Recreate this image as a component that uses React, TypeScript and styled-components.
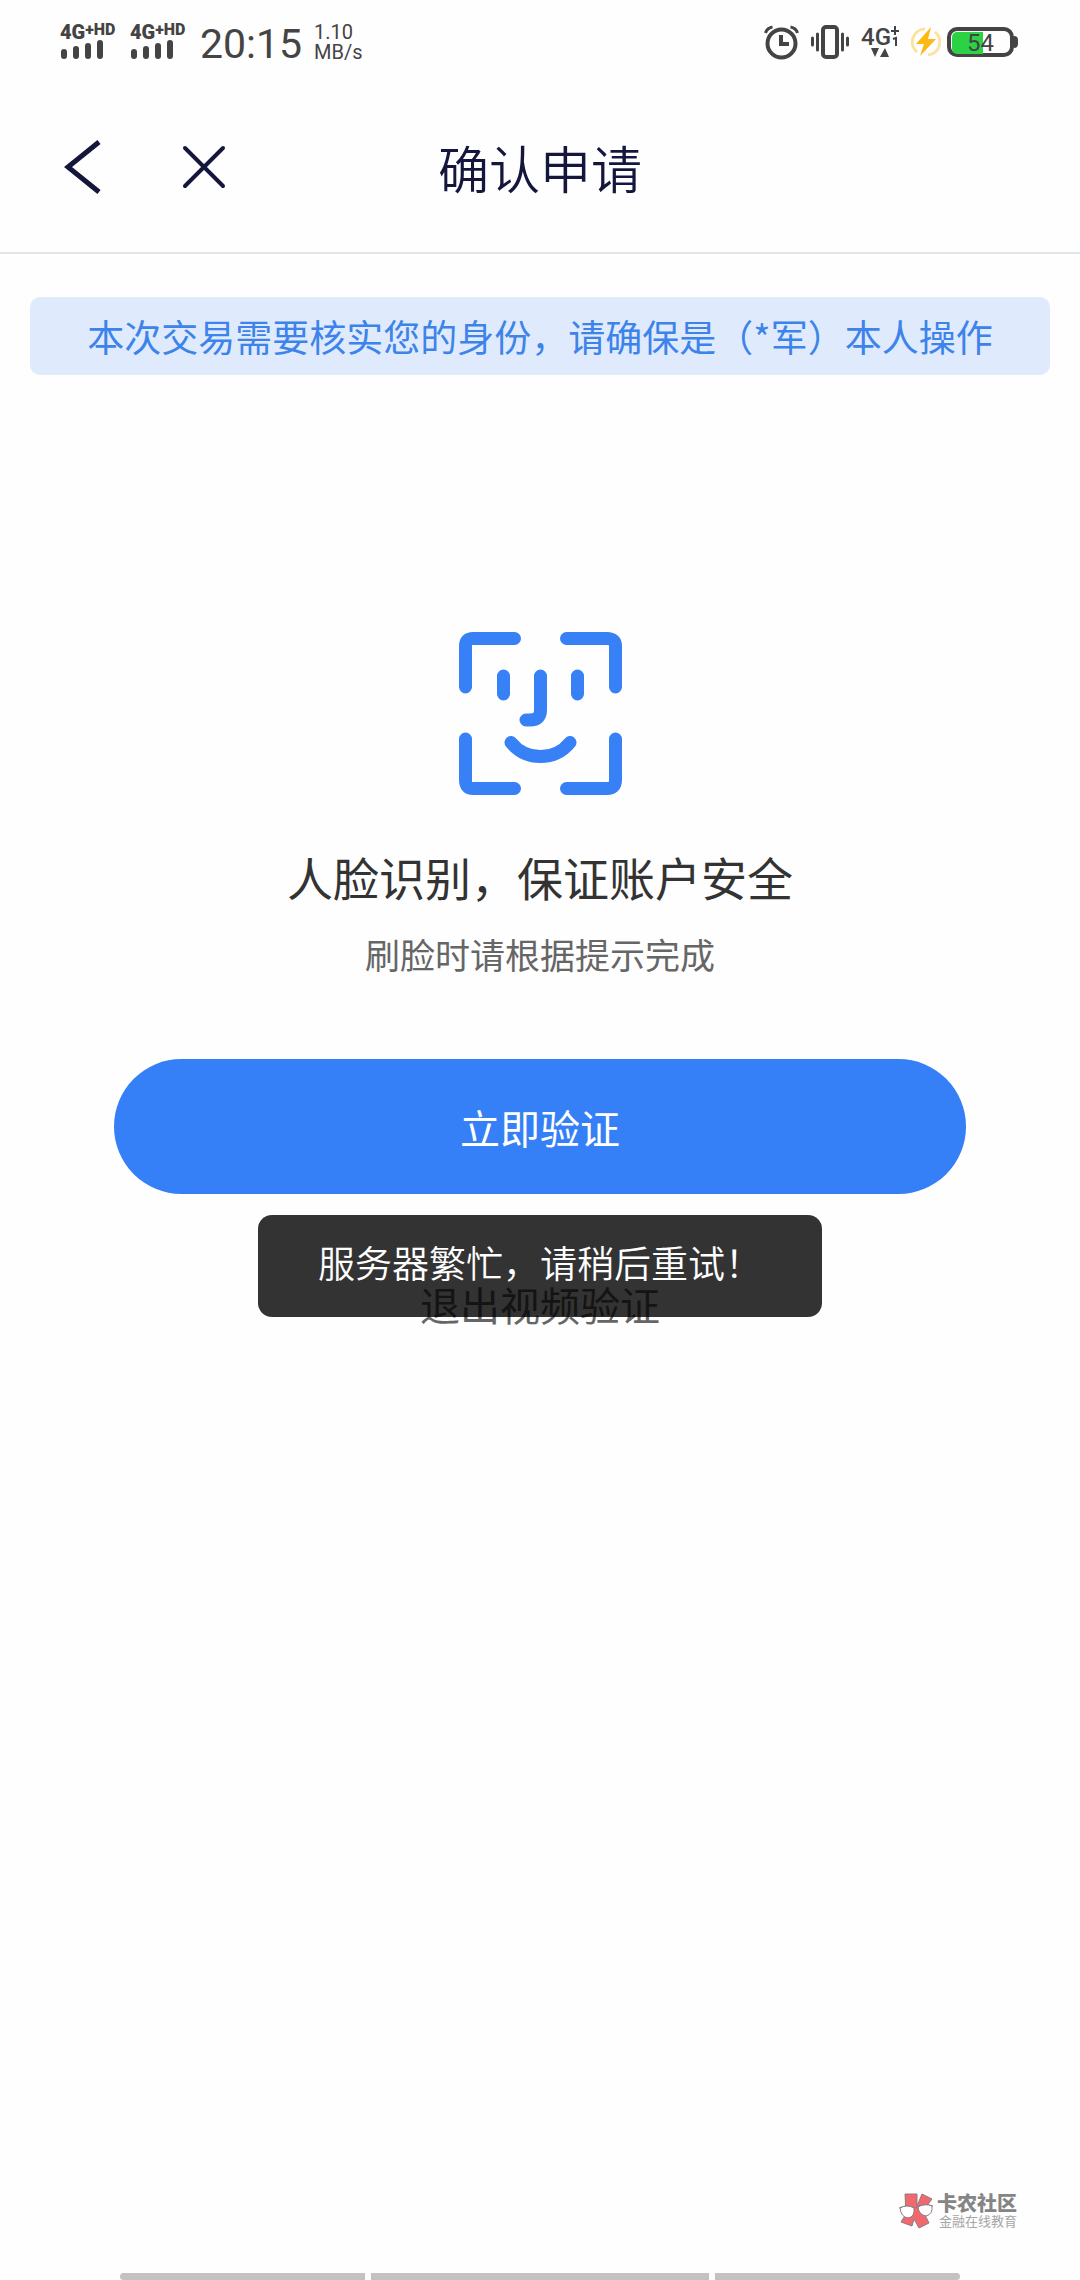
import React from 'react';
import styled, { createGlobalStyle } from 'styled-components';

const GlobalStyle = createGlobalStyle`
  * { box-sizing: border-box; }
  body {
    margin: 0;
    background: #fefefe;
    font-family: "Noto Sans CJK SC", sans-serif;
  }
  button { font-family: inherit; border: 0; background: none; padding: 0; cursor: pointer; }
  svg { display: block; }
`;

const Page = styled.div`
  min-height: 100vh;
  display: flex;
  flex-direction: column;
`;

const StatusBar = styled.div`
  height: 84px;
  padding: 0 66px 0 60px;
  display: flex;
  align-items: center;
  justify-content: space-between;
  color: #444;
  font-family: Roboto, "Noto Sans CJK SC", sans-serif;
`;

const StatusGroup = styled.div<{ $gap: number }>`
  display: flex;
  align-items: center;
  gap: ${(p) => p.$gap}px;
`;

const Signal = styled.div`
  width: 58px;
`;

const SignalLabel = styled.div`
  display: flex;
  align-items: flex-start;
  font-size: 20px;
  line-height: 16px;
  font-weight: 900;
  small { font-size: 16px; line-height: 12px; }
`;

const Clock = styled.div`
  font-size: 41px;
  line-height: 48px;
  padding-top: 4px;
`;

const Speed = styled.div`
  font-size: 20px;
  line-height: 20px;
`;

const Network = styled.div`
  width: 38px;
  display: flex;
  flex-direction: column;
  align-items: center;
`;

const NetworkLabel = styled.div`
  display: flex;
  font-size: 24px;
  line-height: 22px;
  font-weight: 500;
`;

const Battery = styled.div`
  width: 67px;
  height: 30px;
  border: 4px solid #444;
  border-radius: 10px;
  padding: 1px;
  position: relative;
  display: grid;
  &::after {
    content: "";
    position: absolute;
    right: -8px;
    top: 5px;
    width: 4px;
    height: 12px;
    border-radius: 0 4px 4px 0;
    background: #444;
  }
`;

const BatteryFill = styled.div`
  grid-area: 1 / 1;
  border-radius: 5px 0 0 5px;
  background: #2bd344;
`;

const BatteryText = styled.div`
  grid-area: 1 / 1;
  text-align: center;
  font-size: 24px;
  line-height: 22px;
`;

const Header = styled.header`
  height: 170px;
  padding: 0 60px 2px;
  display: grid;
  grid-template-columns: 1fr auto 1fr;
  align-items: center;
  border-bottom: 2px solid #e3e5e7;
`;

const NavButtons = styled.div`
  display: flex;
  align-items: center;
  gap: 78px;
`;

const Title = styled.h1`
  margin: 0;
  font-size: 51px;
  line-height: 72px;
  font-weight: 350;
  color: #14163c;
`;

const Main = styled.main`
  flex: 1;
  display: flex;
  flex-direction: column;
  padding: 43px 30px 0;
`;

const Notice = styled.p`
  margin: 0;
  min-height: 78px;
  border-radius: 10px;
  background: #dfebfd;
  color: #3d83ea;
  display: flex;
  align-items: center;
  justify-content: center;
  font-size: 37px;
  line-height: 54px;
`;

const Verify = styled.section`
  display: flex;
  flex-direction: column;
  align-items: center;
  padding: 257px 84px 0;
`;

const Heading = styled.h2`
  margin: 45px 0 0;
  font-size: 46px;
  line-height: 72px;
  font-weight: 400;
  color: #333;
`;

const Hint = styled.p`
  margin: 18px 0 0;
  font-size: 35px;
  line-height: 48px;
  color: #666;
`;

const PrimaryButton = styled.button`
  align-self: stretch;
  height: 135px;
  margin-top: 81px;
  border-radius: 68px;
  background: #357ff7;
  color: #fff;
  font-size: 40px;
`;

const ExitArea = styled.div`
  position: relative;
  align-self: stretch;
  display: flex;
  justify-content: center;
  padding-top: 80px;
`;

const ExitButton = styled.button`
  font-size: 40px;
  line-height: 60px;
  color: #666;
`;

const Toast = styled.div`
  position: absolute;
  top: 21px;
  left: 50%;
  transform: translateX(-50%);
  padding: 20px 60px 28px;
  border-radius: 14px;
  background: rgba(0, 0, 0, 0.8);
  color: #fff;
  font-size: 37px;
  line-height: 54px;
  font-weight: 350;
  white-space: nowrap;
`;

const Footer = styled.footer`
  display: flex;
  flex-direction: column;
  gap: 44px;
`;

const Brand = styled.div`
  align-self: flex-end;
  display: flex;
  align-items: center;
  gap: 3px;
  margin-right: 63px;
`;

const BrandName = styled.div`
  font-size: 20px;
  line-height: 21px;
  font-weight: 900;
  color: #858585;
`;

const BrandTag = styled.div`
  padding-left: 2px;
  font-size: 13px;
  line-height: 16px;
  color: #a6a6a6;
`;

const GestureBar = styled.div`
  display: grid;
  grid-template-columns: 245fr 339fr 245fr;
  gap: 6px;
  padding: 0 120px;
`;

const GestureSegment = styled.div`
  height: 7px;
  background: #c2c2c2;
  &:first-child { border-radius: 4px 0 0 4px; }
  &:last-child { border-radius: 0 4px 4px 0; }
`;

const SignalStrength = () => (
  <Signal>
    <SignalLabel>4G<small>+HD</small></SignalLabel>
    <svg width="44" height="20" viewBox="0 0 44 20" stroke="#444" strokeWidth="6" strokeLinecap="round">
      <path d="M4 12v4M16 9v7M28 6v10M40 3v13" />
    </svg>
  </Signal>
);

const AlarmIcon = () => (
  <svg width="35" height="35" viewBox="0 0 35 35" fill="none" stroke="#444">
    <circle cx="17.500" cy="18.500" r="14" strokeWidth="4" />
    <path d="M17 10v9h8" strokeWidth="4" />
    <path d="M1.500 8Q3 3 8.500 2M33.500 8Q32 3 26.500 2" strokeWidth="3" />
  </svg>
);

const VibrateIcon = () => (
  <svg width="38" height="34" viewBox="0 0 38 34" fill="none" stroke="#444" strokeLinecap="round">
    <rect x="12" y="2" width="14" height="30" rx="3" strokeWidth="4" />
    <path d="M1.500 13v7M36.500 13v7M6.500 9v16M31.500 9v16" strokeWidth="3" />
  </svg>
);

const ChargeIcon = () => (
  <svg width="30" height="30" viewBox="0 0 30 30" fill="none">
    <path d="M14 2A13 13 0 0 0 6 25M17 28A13 13 0 0 0 24 5" stroke="#fde3a0" strokeWidth="3" />
    <path d="M20 0 5 17h8l-4 12L25 12h-8z" fill="#fdb813" />
  </svg>
);

const FaceIcon = () => (
  <svg width="163" height="163" viewBox="0 0 163 163" fill="none" stroke="#3880f5" strokeWidth="13" strokeLinecap="round">
    <path d="M6.500 55V14Q6.500 6.500 14 6.500H55.500M107.500 6.500H148Q156.500 6.500 156.500 14V55M156.500 107V148Q156.500 156.500 148 156.500H107.500M55.500 156.500H14Q6.500 156.500 6.500 148V107" />
    <path d="M44.500 44V62M118.500 44V62M81.500 44V78Q81.500 88 71 88H67M52 110.500A38 38 0 0 0 111 110.500" />
  </svg>
);

const BrandLogo = () => (
  <svg width="35" height="36" viewBox="0 0 35 36" stroke="#8d7c80" strokeWidth="1">
    <path d="M6 1h12v12l5-12 10 5-9 12 6 12-10 5-5-9-2 7-11-4 5-8z" fill="#f2686f" />
    <path d="M0 15Q8 11 16 15L18 14Q26 10 34 13" fill="none" />
    <path d="M1 15Q8 11 15 15Q16 24 9 25Q2 24 1 15zM19 14Q26 10 33 13Q34 21 27 23Q20 22 19 14z" fill="#fff" />
  </svg>
);

export default function App() {
  return (
    <Page>
      <GlobalStyle />
      <StatusBar>
        <StatusGroup $gap={12}>
          <SignalStrength />
          <SignalStrength />
          <Clock>20:15</Clock>
          <Speed>1.10<br />MB/s</Speed>
        </StatusGroup>
        <StatusGroup $gap={12}>
          <AlarmIcon />
          <VibrateIcon />
          <Network>
            <NetworkLabel>
              4G
              <svg width="8" height="20" viewBox="0 0 8 20" stroke="#444" strokeWidth="2" fill="none">
                <path d="M4 0v9M0 5h8M2 13l3-1v8" />
              </svg>
            </NetworkLabel>
            <svg width="18" height="10" viewBox="0 0 18 10" fill="#444">
              <path d="M0 0h8L4 9zM9 9h9l-4-9z" />
            </svg>
          </Network>
          <StatusGroup $gap={6}>
            <ChargeIcon />
            <Battery>
              <BatteryFill style={{ width: '54%' }} />
              <BatteryText>54</BatteryText>
            </Battery>
          </StatusGroup>
        </StatusGroup>
      </StatusBar>
      <Header>
        <NavButtons>
          <button type="button" aria-label="返回">
            <svg width="44" height="54" viewBox="0 0 44 54" fill="none" stroke="#14163c" strokeWidth="5">
              <path d="M39 2 8 27 39 52" />
            </svg>
          </button>
          <button type="button" aria-label="关闭">
            <svg width="44" height="44" viewBox="0 0 44 44" fill="none" stroke="#14163c" strokeWidth="4" strokeLinecap="round">
              <path d="M3 3l38 38M41 3 3 41" />
            </svg>
          </button>
        </NavButtons>
        <Title>确认申请</Title>
      </Header>
      <Main>
        <Notice>本次交易需要核实您的身份，请确保是（*军）本人操作</Notice>
        <Verify>
          <FaceIcon />
          <Heading>人脸识别，保证账户安全</Heading>
          <Hint>刷脸时请根据提示完成</Hint>
          <PrimaryButton type="button">立即验证</PrimaryButton>
          <ExitArea>
            <ExitButton type="button">退出视频验证</ExitButton>
            <Toast role="status">服务器繁忙，请稍后重试！</Toast>
          </ExitArea>
        </Verify>
      </Main>
      <Footer>
        <Brand>
          <BrandLogo />
          <div>
            <BrandName>卡农社区</BrandName>
            <BrandTag>金融在线教育</BrandTag>
          </div>
        </Brand>
        <GestureBar>
          <GestureSegment />
          <GestureSegment />
          <GestureSegment />
        </GestureBar>
      </Footer>
    </Page>
  );
}
